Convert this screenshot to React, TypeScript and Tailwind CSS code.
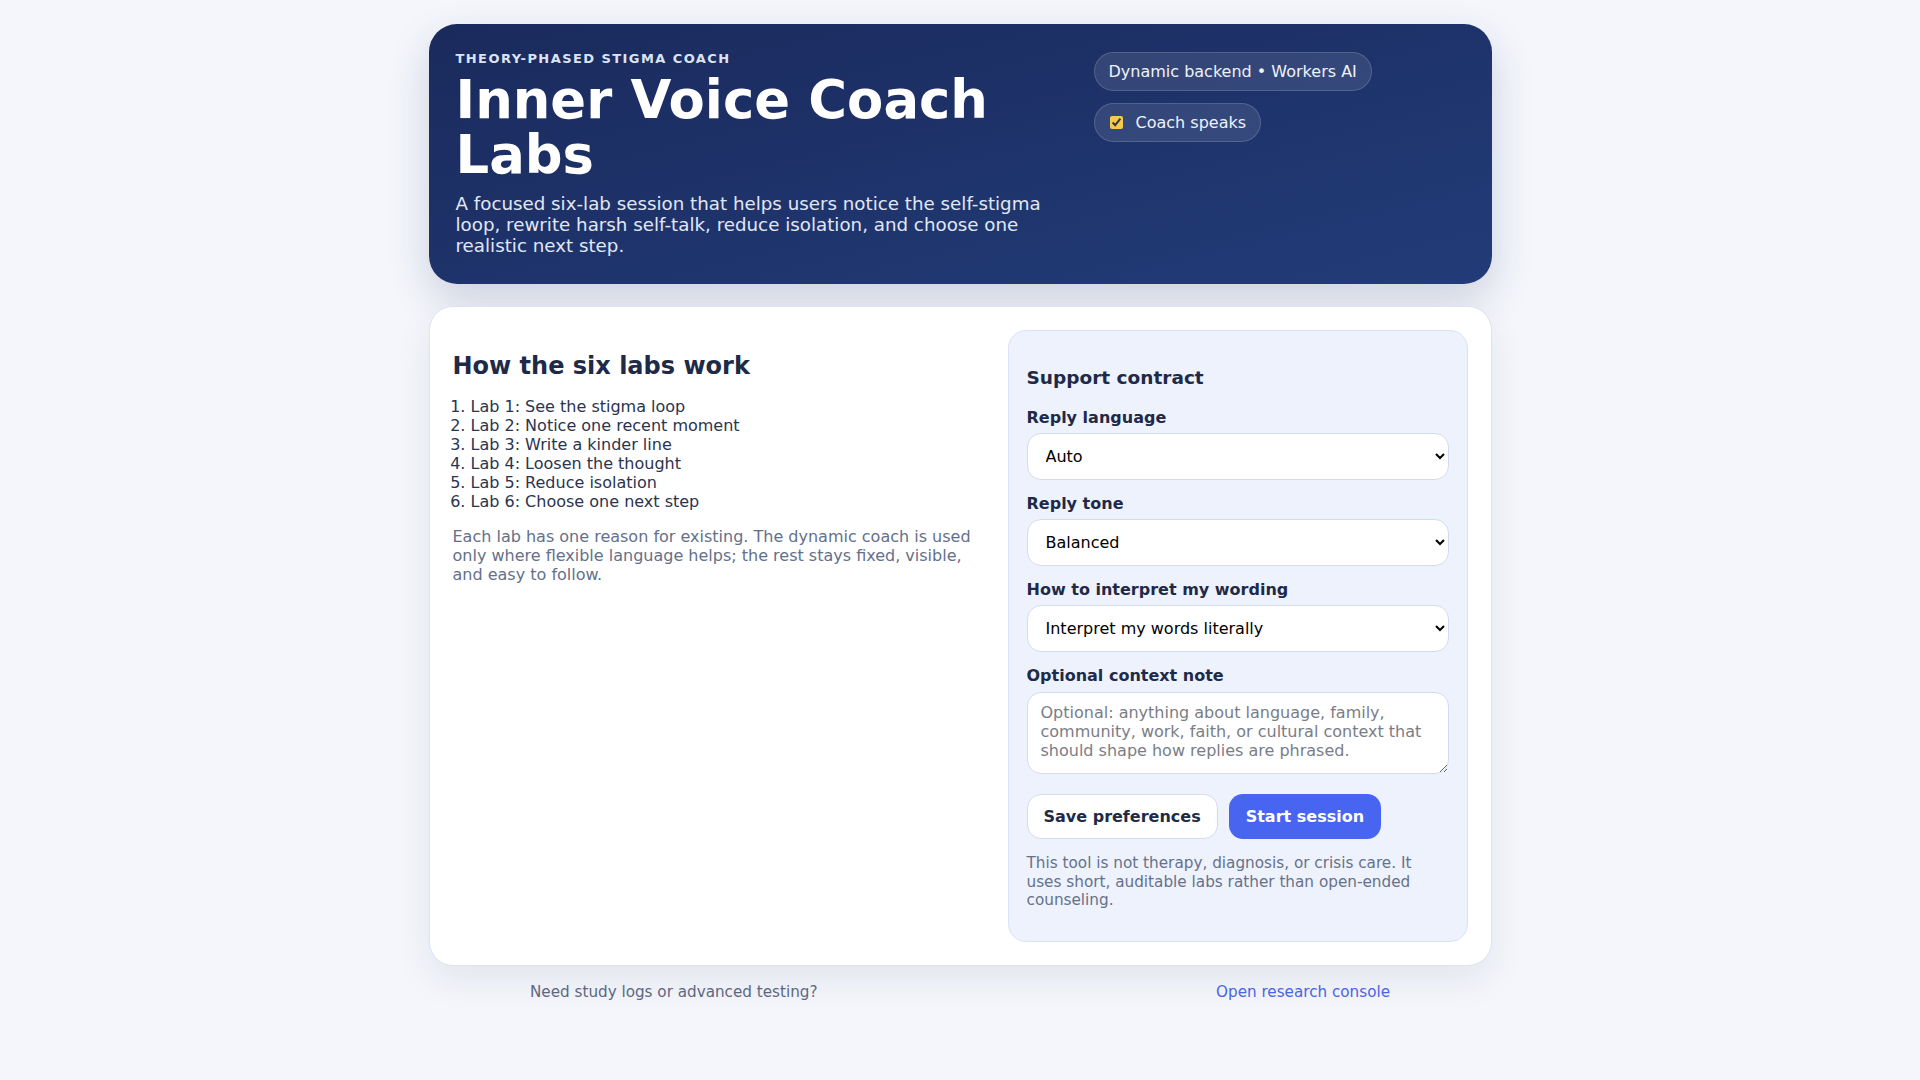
import { useState } from 'react';

const labs = [
  'Lab 1: See the stigma loop',
  'Lab 2: Notice one recent moment',
  'Lab 3: Write a kinder line',
  'Lab 4: Loosen the thought',
  'Lab 5: Reduce isolation',
  'Lab 6: Choose one next step',
];

function Field({ label, children }: { label: string; children: React.ReactNode }) {
  return (
    <label className="flex flex-col gap-[5px]">
      <span className="text-[16px] font-bold leading-[20px] text-[#1e2a47]">{label}</span>
      {children}
    </label>
  );
}

const selectCls =
  'h-[47px] w-full rounded-[14px] border border-[#d3dbee] bg-white px-[14px] text-[16px] text-black outline-none';

export default function App() {
  const [speaks, setSpeaks] = useState(true);

  return (
    <div
      className="min-h-screen bg-[#f4f6fb] text-[#1e2a47]"
      style={{ fontFamily: '"DejaVu Sans", "Noto Sans", sans-serif' }}
    >
      <div className="mx-auto flex w-[1063px] flex-col pt-[24px]">
        {/* header */}
        <header className="grid grid-cols-[610px_1fr] gap-[28px] rounded-[28px] bg-linear-to-br from-[#1a2a5c] to-[#223c79] px-[27px] pb-[27.5px] pt-[27px] shadow-[0_16px_40px_rgba(27,43,94,0.18)]">
          <div className="min-w-0">
            <p className="text-[13px] font-bold uppercase leading-[16px] tracking-[0.11em] text-[#dbe3f4]">
              Theory-phased stigma coach
            </p>
            <h1 className="mt-[5px] text-[52.8px] font-bold leading-[55px] text-white">
              Inner Voice Coach Labs
            </h1>
            <p className="mt-[12px] text-[18.25px] leading-[20.8px] text-[#e1e7f5]">
              A focused six-lab session that helps users notice the self-stigma loop, rewrite harsh
              self-talk, reduce isolation, and choose one realistic next step.
            </p>
          </div>
          <div className="flex flex-col items-start gap-[12px] pt-[1px]">
            <span className="inline-flex h-[39px] items-center rounded-full border border-white/15 bg-white/10 px-[14px] text-[16px] text-[#eef2fb]">
              Dynamic backend • Workers AI
            </span>
            <label className="inline-flex h-[39px] items-center gap-[13px] rounded-full border border-white/15 bg-white/10 pl-[15px] pr-[14px] text-[16px] text-[#eef2fb]">
              <input
                type="checkbox"
                checked={speaks}
                onChange={(e) => setSpeaks(e.target.checked)}
                className="h-[13px] w-[13px] accent-[#f6c94e]"
              />
              Coach speaks
            </label>
          </div>
        </header>

        {/* main card */}
        <main className="mt-[22px] grid grid-cols-[1fr_460px] gap-[24px] rounded-[24px] border border-[#dde3f0] bg-white p-[23px] shadow-[0_14px_36px_rgba(30,42,71,0.08)]">
          <section className="pt-[22px]">
            <h2 className="text-[24px] font-bold leading-[29px] text-[#1e2a47]">How the six labs work</h2>
            <ol className="mt-[16.5px] list-decimal pl-[18px] text-[16px] leading-[19px] text-[#2a3450]">
              {labs.map((l) => (
                <li key={l}>{l}</li>
              ))}
            </ol>
            <p className="mt-[16px] text-[16px] leading-[19px] text-[#64708a]">
              Each lab has one reason for existing. The dynamic coach is used only where flexible
              language helps; the rest stays fixed, visible, and easy to follow.
            </p>
          </section>

          <aside className="flex flex-col rounded-[18px] border border-[#d9e2f7] bg-[#eef2fd] px-[18px] pb-[31.5px] pt-[36px]">
            <h3 className="text-[18.5px] font-bold leading-[22px] text-[#1e2a47]">Support contract</h3>
            <div className="mt-[19.5px] flex flex-col gap-[14px]">
              <Field label="Reply language">
                <select className={selectCls} defaultValue="auto">
                  <option value="auto">Auto</option>
                  <option value="en">English</option>
                </select>
              </Field>
              <Field label="Reply tone">
                <select className={selectCls} defaultValue="balanced">
                  <option value="balanced">Balanced</option>
                  <option value="gentle">Gentle</option>
                </select>
              </Field>
              <Field label="How to interpret my wording">
                <select className={selectCls} defaultValue="literal">
                  <option value="literal">Interpret my words literally</option>
                  <option value="flex">Interpret my words flexibly</option>
                </select>
              </Field>
              <label className="flex flex-col gap-[6px]">
                <span className="text-[16px] font-bold leading-[20px] text-[#1e2a47]">
                  Optional context note
                </span>
                <textarea
                  className="h-[82px] w-full rounded-[14px] border border-[#d3dbee] bg-white px-[13px] py-[10px] text-[16px] leading-[19px] text-black outline-none placeholder:text-[#7a7d86]"
                  placeholder="Optional: anything about language, family, community, work, faith, or cultural context that should shape how replies are phrased."
                />
              </label>
            </div>
            <div className="mt-[20px] flex gap-[11px]">
              <button
                type="button"
                className="h-[45px] rounded-[14px] border border-[#d3dbee] bg-white px-[16px] text-[16px] font-bold text-[#1e2a47]"
              >
                Save preferences
              </button>
              <button
                type="button"
                className="h-[45px] rounded-[14px] bg-[#4865f2] px-[17px] text-[16px] font-bold text-white"
              >
                Start session
              </button>
            </div>
            <p className="mt-[15px] text-[15.25px] leading-[18.4px] text-[#65718b]">
              This tool is not therapy, diagnosis, or crisis care. It uses short, auditable labs
              rather than open-ended counseling.
            </p>
          </aside>
        </main>

        <footer className="mx-auto mt-[15.5px] flex w-[860px] items-center justify-between text-[15.2px] leading-[20px]">
          <span className="text-[#5d6780]">Need study logs or advanced testing?</span>
          <a href="#" className="text-[#4a63e8]">
            Open research console
          </a>
        </footer>
      </div>
    </div>
  );
}
